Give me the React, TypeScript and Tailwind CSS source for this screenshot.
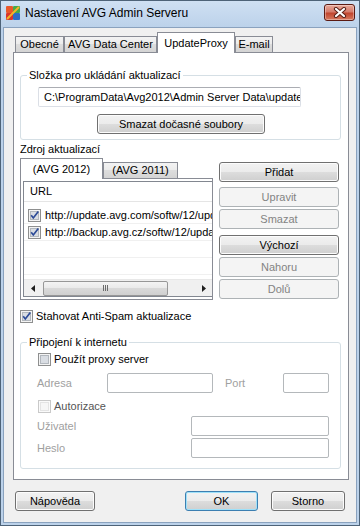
import React from 'react'

type ButtonProps = {
  label: string
  className?: string
  disabled?: boolean
  focused?: boolean
}

const Button = ({ label, className = '', disabled, focused }: ButtonProps) => {
  const look = disabled
    ? 'border-[#adb2b5] bg-[#f4f4f4] text-[#838383]'
    : focused
      ? 'border-[#3c7fb1] bg-[linear-gradient(#f2f2f2,#ebebeb_50%,#dddddd_50%,#cfcfcf)] shadow-[inset_0_0_0_1px_#9fe1f9]'
      : 'border-[#707070] bg-[linear-gradient(#f2f2f2,#ebebeb_50%,#dddddd_50%,#cfcfcf)] shadow-[inset_0_0_0_1px_#fcfcfc]'
  return (
    <button type="button" className={`h-[20px] shrink-0 flex items-center justify-center rounded-[3px] border ${look} ${className}`}>
      {label}
    </button>
  )
}

const CheckBox = ({ checked = false, disabled = false }: { checked?: boolean; disabled?: boolean }) => (
  <svg width="13" height="13" viewBox="0 0 13 13" className="shrink-0">
    <rect x="0.5" y="0.5" width="12" height="12" fill={disabled ? '#fafafa' : '#f4f4f4'} stroke={disabled ? '#c9c9c9' : '#8e8f8f'} />
    <rect x="2.5" y="2.5" width="8" height="8" fill={disabled ? '#f6f6f6' : '#d9dde3'} stroke={disabled ? '#e4e4e4' : '#b2b7bd'} />
    {checked && <path d="M3.2 6.2 L5.3 8.9 L10.3 2.4" fill="none" stroke="#2c4a97" strokeWidth="1.7" />}
  </svg>
)

const AvgLogo = ({ className = '' }: { className?: string }) => (
  <svg width="16" height="16" viewBox="0 0 16 16" className={className}>
    <rect x="1" y="1" width="7" height="7" rx="1" fill="#e9572a" />
    <rect x="8" y="1" width="7" height="7" rx="1" fill="#45a94b" />
    <rect x="1" y="8" width="7" height="7" rx="1" fill="#d8342b" />
    <rect x="8" y="8" width="7" height="7" rx="1" fill="#2d6cc5" />
    <path d="M2 14 L14 2" stroke="#f4b526" strokeWidth="2" />
  </svg>
)

const Tab = ({ label, width, active }: { label: string; width: string; active?: boolean }) => (
  <div
    className={
      active
        ? `${width} h-[21px] -mb-px relative z-10 flex items-center justify-center border border-b-0 border-[#898c95] bg-white`
        : `${width} h-[16px] flex items-center justify-center border border-b-0 border-[#898c95] bg-[linear-gradient(#f3f3f3,#ebebeb_50%,#dddddd_50%,#d4d4d4)]`
    }
  >
    {label}
  </div>
)

const urls = ['http://update.avg.com/softw/12/update/', 'http://backup.avg.cz/softw/12/update/']

export default function App() {
  return (
    <div className="w-[360px] h-[526px] flex flex-col border border-[#4e6378] bg-[#bcd2ea] font-['Liberation_Sans',Arial,sans-serif] text-[11px] leading-[13px] text-black overflow-hidden select-none">
      {/* title bar */}
      <div className="h-[26px] shrink-0 flex items-start bg-[linear-gradient(#cfe0f3,#bcd2ea)]">
        <AvgLogo className="mt-[4px] ml-[4px] shrink-0" />
        <span className="ml-[4px] mt-[5px] text-[12px] leading-[15px]">Nastavení AVG Admin Serveru</span>
        <div className="ml-auto mt-[3px] mr-[4px] w-[31px] h-[17px] rounded-[3px] border border-[#5b1a12] bg-[linear-gradient(#e9a899,#d57c6c_45%,#c1462f_55%,#d77a60)] shadow-[inset_0_0_0_1px_rgba(255,255,255,0.35)] flex items-center justify-center">
          <svg width="14" height="11" viewBox="0 0 14 11">
            <path d="M3 2 L11 9 M11 2 L3 9" stroke="#5a2118" strokeWidth="4.2" strokeLinecap="round" />
            <path d="M3 2 L11 9 M11 2 L3 9" stroke="#ffffff" strokeWidth="2.2" strokeLinecap="round" />
          </svg>
        </div>
      </div>

      {/* body */}
      <div className="mx-[2px] mb-[2px] flex-1 flex flex-col border border-[#8aa2be] bg-[#f0f0f0] pl-[9px]">
        {/* tabs */}
        <div className="mt-[4px] ml-[2px] h-[20px] flex items-end">
          <Tab label="Obecné" width="w-[49px]" />
          <Tab label="AVG Data Center" width="w-[93px]" />
          <Tab label="UpdateProxy" width="w-[78px]" active />
          <Tab label="E-mail" width="w-[38px]" />
        </div>

        {/* tab panel */}
        <div className="w-[336px] h-[428px] shrink-0 flex flex-col border border-[#898c95] bg-white px-[6px]">
          <fieldset className="mt-[16px] w-[321px] rounded-[3px] border border-[#d5dfe5] pl-[6px] pb-[5px]">
            <legend className="px-[2px] leading-[13px]">Složka pro ukládání aktualizací</legend>
            <div className="mt-[5px] ml-[11px] w-[263px] h-[20px] flex items-center overflow-hidden whitespace-nowrap rounded-[2px] border border-[#dbdfe6] border-t-[#abadb3] bg-white pl-[5px]">
              {'C:\\ProgramData\\Avg2012\\Admin Server Data\\update'}
            </div>
            <Button label="Smazat dočasné soubory" className="mt-[7px] ml-[70px] w-[168px]" />
          </fieldset>

          <div className="mt-[3px]">Zdroj aktualizací</div>

          <div className="mt-[4px] flex">
            <div className="w-[193px] flex flex-col">
              <div className="h-[18px] flex items-end">
                <Tab label="(AVG 2012)" width="w-[83px]" active />
                <Tab label="(AVG 2011)" width="w-[75px]" />
              </div>
              <div className="h-[122px] overflow-hidden border border-[#898c95] bg-white pl-[2px] py-[2px]">
                <div className="h-[116px] flex flex-col border border-r-0 border-[#828790] bg-white">
                  <div className="h-[20px] shrink-0 flex items-center border-b border-[#e5e5e5] pl-[6px]">URL</div>
                  <div className="flex-1 overflow-hidden pt-[5px]">
                    {urls.map((url) => (
                      <div key={url} className="h-[17px] flex items-center gap-[4px] whitespace-nowrap border-b border-[#f0f0f0] pl-[4px]">
                        <CheckBox checked />
                        <span>{url}</span>
                      </div>
                    ))}
                    <div className="h-[17px] border-b border-[#f0f0f0]" />
                    <div className="h-[17px] border-b border-[#f0f0f0]" />
                  </div>
                  <div className="h-[17px] shrink-0 flex bg-[#f0f0f0] border-t border-[#e8e8e8]">
                    <div className="w-[17px] flex items-center justify-center">
                      <svg width="4" height="7" viewBox="0 0 4 7"><path d="M4 0 L0 3.5 L4 7 Z" fill="#1f1f1f" /></svg>
                    </div>
                    <div className="flex-1 flex items-center">
                      <div className="ml-[2px] w-[125px] h-[15px] flex items-center justify-center gap-[1px] rounded-[2px] border border-[#979797] bg-[linear-gradient(#f4f4f4,#e9e9e9_50%,#d9d9d9_50%,#d0d0d0)]">
                        <span className="w-px h-[6px] bg-[#6b6b6b]" />
                        <span className="w-px h-[6px] bg-[#6b6b6b]" />
                        <span className="w-px h-[6px] bg-[#6b6b6b]" />
                      </div>
                    </div>
                    <div className="w-[17px] flex items-center justify-center">
                      <svg width="4" height="7" viewBox="0 0 4 7"><path d="M0 0 L4 3.5 L0 7 Z" fill="#1f1f1f" /></svg>
                    </div>
                  </div>
                </div>
              </div>
            </div>

            <div className="ml-[6px] w-[120px] pt-[2px] flex flex-col">
              <Button label="Přidat" />
              <Button label="Upravit" className="mt-[5px]" disabled />
              <Button label="Smazat" className="mt-[2px]" disabled />
              <Button label="Výchozí" className="mt-[6px]" />
              <Button label="Nahoru" className="mt-[2px]" disabled />
              <Button label="Dolů" className="mt-[2px]" disabled />
            </div>
          </div>

          <div className="mt-[10px] h-[13px] flex items-center gap-[3px]">
            <CheckBox checked />
            <span>Stahovat Anti-Spam aktualizace</span>
          </div>

          <fieldset className="mt-[13px] w-[321px] rounded-[3px] border border-[#d5dfe5] pl-[6px] pb-[10px]">
            <legend className="px-[2px] leading-[13px]">Připojení k internetu</legend>
            <div className="mt-[4px] ml-[11px] h-[13px] flex items-center gap-[3px]">
              <CheckBox />
              <span>Použít proxy server</span>
            </div>
            <div className="mt-[7px] h-[20px] flex items-center text-[#a0a0a0]">
              <span className="ml-[10px] w-[70px]">Adresa</span>
              <div className="w-[106px] h-[20px] rounded-[2px] border border-[#b4b8bb] bg-white" />
              <span className="ml-[12px] w-[58px]">Port</span>
              <div className="w-[46px] h-[20px] rounded-[2px] border border-[#b4b8bb] bg-white" />
            </div>
            <div className="mt-[7px] ml-[11px] h-[13px] flex items-center gap-[3px] text-[#555555]">
              <CheckBox disabled />
              <span>Autorizace</span>
            </div>
            <div className="mt-[3px] h-[20px] flex items-center text-[#a0a0a0]">
              <span className="ml-[10px] w-[154px]">Uživatel</span>
              <div className="w-[138px] h-[20px] rounded-[2px] border border-[#b4b8bb] bg-white" />
            </div>
            <div className="mt-[2px] h-[20px] flex items-center text-[#a0a0a0]">
              <span className="ml-[10px] w-[154px]">Heslo</span>
              <div className="w-[138px] h-[20px] rounded-[2px] border border-[#b4b8bb] bg-white" />
            </div>
          </fieldset>
        </div>

        {/* dialog buttons */}
        <div className="mt-[11px] flex">
          <Button label="Nápověda" className="ml-[2px] w-[80px]" />
          <Button label="OK" className="ml-[90px] w-[73px]" focused />
          <Button label="Storno" className="ml-[13px] w-[74px]" />
        </div>
      </div>
    </div>
  )
}
